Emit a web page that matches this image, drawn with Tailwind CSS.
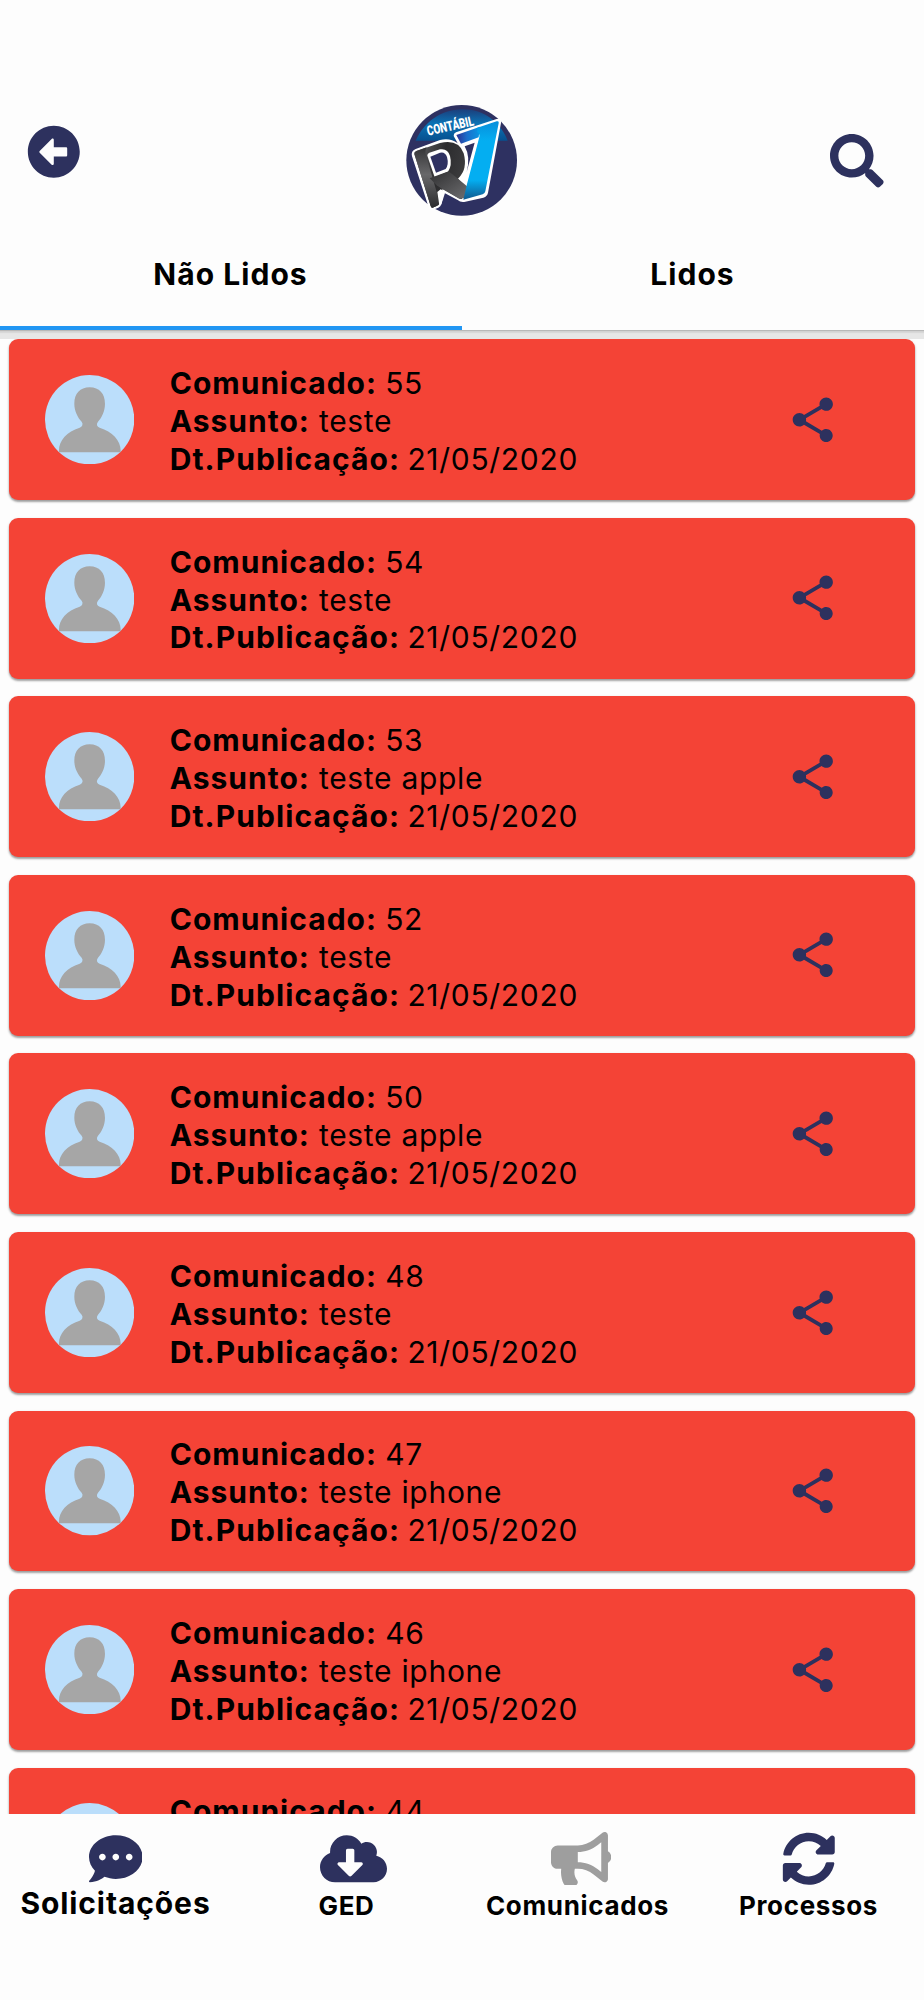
<!DOCTYPE html>
<html lang="pt-BR">
<head>
<meta charset="utf-8">
<title>Comunicados</title>
<script src="https://cdn.jsdelivr.net/npm/@tailwindcss/browser@4"></script>
</head>
<body class="bg-[#fdfdfd]">
<div class="flex h-[2000px] w-[924px] flex-col overflow-hidden bg-[#fdfdfd] font-['Inter',sans-serif] text-[30px] text-black">

  <header class="relative z-10 flex h-[330px] shrink-0 flex-col bg-[#fdfdfd] shadow-[0_1px_1px_#b8b8b8,0_3px_1px_#d8d8d8,0_9px_0_#e6e6e6]">
    <div class="flex h-[230px] items-start justify-between pr-[40px] pl-[27px]">
      <svg class="mt-[125px] size-[53.6px]" viewBox="0 0 512 512" fill="#2d315e"><path d="M256 504C119 504 8 393 8 256S119 8 256 8s248 111 248 248-111 248-248 248zm116-292H256v-70.9c0-10.7-13-16.1-20.5-8.5L121.2 247.5c-4.7 4.7-4.7 12.2 0 16.9l114.3 114.9c7.6 7.6 20.5 2.2 20.5-8.5V300h116c6.6 0 12-5.4 12-12v-64c0-6.6-5.4-12-12-12z"/></svg>
      <svg class="mt-[90px] mr-[-13px] h-[140px] w-[144px]" viewBox="0 0 432 420">
        <defs>
          <linearGradient id="sky" x1="0" y1="0" x2="0" y2="1"><stop offset="0" stop-color="#1b3f7c"/><stop offset=".45" stop-color="#0b72b4"/><stop offset="1" stop-color="#06508f"/></linearGradient>
          <linearGradient id="coal" x1="0" y1="0" x2="1" y2=".35"><stop offset="0" stop-color="#6a6a6c"/><stop offset=".3" stop-color="#464648"/><stop offset=".55" stop-color="#2c2c2e"/><stop offset="1" stop-color="#3c3c3e"/></linearGradient>
          <linearGradient id="coal2" x1="0" y1="0" x2="0" y2="1"><stop offset="0" stop-color="#343436"/><stop offset=".45" stop-color="#68686a"/><stop offset="1" stop-color="#2c2c2e"/></linearGradient>
          <linearGradient id="leg" x1="0" y1="0" x2="1" y2="1"><stop offset="0" stop-color="#2e2e30"/><stop offset="1" stop-color="#707072"/></linearGradient>
          <linearGradient id="seven" x1="0" y1="0" x2="0" y2="1"><stop offset="0" stop-color="#078fdb"/><stop offset=".25" stop-color="#04aef1"/><stop offset=".75" stop-color="#04aef1"/><stop offset="1" stop-color="#10598f"/></linearGradient>
          <linearGradient id="bar" x1="0" y1="0" x2="1" y2="0"><stop offset="0" stop-color="#2c2f92"/><stop offset=".45" stop-color="#1c6fcb"/><stop offset="1" stop-color="#0797e3"/></linearGradient>
        </defs>
        <circle cx="215" cy="211" r="166" fill="#2e3161"/>
        <path d="M77 152C102 96 151 60 215 58s116 38 138 94z" fill="url(#sky)"/>
        <path d="M66 199Q62 183 77 177L150 150Q180 142 203 160L191 138Q190 131 198 127L320 87Q336 83 333 99L294 308Q292 319 280 323L226 335Q212 338 203 330L162 308L154 343Q152 350 145 353L128 360Q119 362 116 352Z" fill="#fff"/>
        <path d="M73 192Q72 186 79 183L150 159Q206 146 221 190Q234 238 204 266L232 298L216 326Q212 328 205 324L158 296L148 341Q146 346 140 348L128 353Q123 354 122 348Z" fill="url(#coal)"/>
        <path d="M73 192Q72 186 79 183L110 172Q104 182 108 196L140 306L148 341L140 348L128 353Q123 354 122 348Z" fill="url(#coal2)"/>
        <path d="M112 197Q111 191 118 188L150 178Q173 174 180 198Q187 226 174 245L134 262Z" fill="#fff"/>
        <path d="M121 200L150 188Q165 184 171 201Q177 224 167 237L138 248Z" fill="#2e3161"/>
        <path d="M119 265L176 244L204 266L240 296L224 324L208 326L158 298L140 286Z" fill="url(#leg)"/>
        <path d="M152 298L166 306L154 343L148 346L142 306Z" fill="#fff"/>
        <path d="M199 135L270 110L266 142L213 161Z" fill="url(#bar)"/>
        <path d="M262 113L320 94Q328 92 326 100L286 304Q285 310 278 313L220 329L231 282L268 141Q270 132 262 126Z" fill="url(#seven)"/>
        <path d="M212 164L260 147L264 150L230 278L210 264Q238 226 226 184Q222 172 212 164Z" fill="#fff"/>
        <path d="M224 169L254 158L230 246Q242 200 224 169Z" fill="#2e3161"/>
        <text transform="translate(114 137) rotate(-12.500)" textLength="143" lengthAdjust="spacingAndGlyphs" font-family="Roboto, sans-serif" font-weight="900" font-size="41" fill="#fff">CONTÁBIL</text>
      </svg>
      <svg class="mt-[134px] size-[53.6px]" viewBox="0 0 512 512" fill="#2d315e"><path d="M505 442.7L405.3 343c-4.500-4.500-10.600-7-17-7H372c27.600-35.300 44-79.700 44-128C416 93.100 322.900 0 208 0S0 93.100 0 208s93.100 208 208 208c48.300 0 92.700-16.400 128-44v16.300c0 6.400 2.500 12.500 7 17l99.700 99.700c9.400 9.400 24.600 9.400 33.900 0l28.300-28.300c9.400-9.400 9.400-24.600.1-34zM208 336c-70.700 0-128-57.200-128-128 0-70.700 57.200-128 128-128 70.700 0 128 57.200 128 128 0 70.700-57.200 128-128 128z"/></svg>
    </div>
    <div class="grid grow grid-cols-2 text-center font-bold tracking-[1.050px]">
      <div class="border-b-[4px] border-[#2196f3] pt-[25px] pr-px leading-[38px]">Não Lidos</div>
      <div class="pt-[25px] pr-px leading-[38px]">Lidos</div>
    </div>
  </header>

  <main id="list" class="flex h-[1484.300px] shrink-0 flex-col gap-[17.86px] overflow-hidden px-[9px] pt-[9.300px]"></main>

  <nav class="grid h-[185.700px] shrink-0 grid-cols-4 bg-[#fdfdfd] text-[26px] font-bold tracking-[0.650px]">
    <div class="flex flex-col items-center pt-[17.300px]">
      <svg class="size-[53.6px] shrink-0" viewBox="0 0 512 512" fill="#2d315e"><path d="M256 32C114.600 32 0 125.100 0 240c0 49.600 21.400 95 57 130.700C44.500 421.100 2.700 466 2.200 466.500c-2.200 2.300-2.800 5.700-1.500 8.700S4.800 480 8 480c66.300 0 116-31.800 140.600-51.400 32.700 12.300 69 19.400 107.400 19.400 141.400 0 256-93.100 256-208S397.400 32 256 32zM128 272c-17.700 0-32-14.300-32-32s14.300-32 32-32 32 14.300 32 32-14.300 32-32 32zm128 0c-17.700 0-32-14.300-32-32s14.300-32 32-32 32 14.300 32 32-14.300 32-32 32zm128 0c-17.700 0-32-14.300-32-32s14.300-32 32-32 32 14.300 32 32-14.300 32-32 32z"/></svg>
      <span class="-mt-px text-[30px] leading-[38px] tracking-[0.900px]">Solicitações</span>
    </div>
    <div class="flex flex-col items-center pt-[17.300px]">
      <svg class="mr-[-13.400px] h-[53.6px] w-[67px] shrink-0" viewBox="0 0 640 512" fill="#2d315e"><path d="M537.600 226.600c4.100-10.700 6.400-22.400 6.400-34.600 0-53-43-96-96-96-19.700 0-38.100 6-53.300 16.200C367 64.200 315.300 32 256 32c-88.400 0-160 71.600-160 160 0 2.700.1 5.400.2 8.100C40.200 219.800 0 273.200 0 336c0 79.500 64.500 144 144 144h368c70.700 0 128-57.300 128-128 0-61.900-44-113.600-102.400-125.400zm-132.900 88.700L299.300 420.700c-6.200 6.200-16.400 6.200-22.600 0L171.300 315.300c-10.100-10.100-2.900-27.300 11.300-27.300H248V176c0-8.800 7.200-16 16-16h48c8.800 0 16 7.200 16 16v112h65.400c14.200 0 21.400 17.200 11.300 27.300z"/></svg>
      <span class="mt-[5px] leading-[32px]">GED</span>
    </div>
    <div class="flex flex-col items-center pt-[17.300px]">
      <svg class="mr-[-6.700px] h-[53.6px] w-[60.300px] shrink-0" viewBox="0 0 576 512" fill="#9e9e9e"><path d="M576 240c0-23.630-12.950-44.040-32-55.120V32.010C544 23.260 537.020 0 512 0c-7.120 0-14.190 2.380-19.980 7.020l-85.030 68.030C364.280 109.190 310.660 128 256 128H64c-35.350 0-64 28.650-64 64v96c0 35.350 28.650 64 64 64h33.700c-1.390 10.480-2.180 21.140-2.180 32 0 39.770 9.260 77.350 25.560 110.940 5.190 10.690 16.520 17.060 28.400 17.060h74.280c26.050 0 41.690-29.840 25.900-50.560-16.400-21.520-26.150-48.360-26.150-77.440 0-11.110 1.620-21.790 4.410-32H256c54.660 0 108.280 18.810 150.980 52.950l85.030 68.030a32.023 32.023 0 0 0 19.980 7.020c24.920 0 32-22.780 32-32V295.130C563.050 284.040 576 263.630 576 240zm-96 141.420l-33.050-26.440C392.950 311.780 325.120 288 256 288v-96c69.120 0 136.950-23.780 190.950-66.980L480 98.580v282.840z"/></svg>
      <span class="mt-[5px] leading-[32px]">Comunicados</span>
    </div>
    <div class="flex flex-col items-center pt-[17.300px]">
      <svg class="size-[53.6px] shrink-0" viewBox="0 0 512 512" fill="#2d315e"><path d="M370.720 133.280C339.458 104.008 298.888 87.962 255.848 88c-77.458.068-144.328 53.178-162.791 126.850-1.344 5.363-6.122 9.150-11.651 9.150H24.103c-7.498 0-13.194-6.807-11.807-14.176C33.933 94.924 134.813 8 256 8c66.448 0 126.791 26.136 171.315 68.685L463.030 40.970C478.149 25.851 504 36.559 504 57.941V192c0 13.255-10.745 24-24 24H345.941c-21.382 0-32.090-25.851-16.971-40.971l41.750-41.749zM32 296h134.059c21.382 0 32.090 25.851 16.971 40.971l-41.750 41.750c31.262 29.273 71.835 45.319 114.876 45.280 77.418-.070 144.315-53.144 162.787-126.849 1.344-5.363 6.122-9.150 11.651-9.150h57.304c7.498 0 13.194 6.807 11.807 14.176C478.067 417.076 377.187 504 256 504c-66.448 0-126.791-26.136-171.315-68.685L48.970 471.030C33.851 486.149 8 475.441 8 454.059V320c0-13.255 10.745-24 24-24z"/></svg>
      <span class="mt-[5px] leading-[32px]">Processos</span>
    </div>
  </nav>
</div>

<template id="card">
  <article class="flex h-[160.700px] shrink-0 items-center rounded-[9px] bg-[#f44336] pr-[75.500px] pl-[35.700px] shadow-[0_2px_2px_rgba(0,0,0,0.3),0_1px_3px_rgba(0,0,0,0.15)]">
    <svg class="size-[89.300px] shrink-0" viewBox="0 0 268 268"><circle cx="134" cy="134" r="134" fill="#bbdefb"/><path d="M134 37C105 37 88 56 88 86C88 108 98 127 110 140Q114 145 112 151Q110 156 104 158C66 170 42 196 42 226V232H227V226C227 196 202 170 164 158Q158 156 156 151Q155 145 159 140C171 127 180 108 180 86C180 56 163 37 134 37Z" fill="#a6a6a6"/></svg>
    <div class="ml-[35.700px] grow pt-[4.600px] leading-[37.900px] tracking-[0.700px]">
      <p><b class="font-bold tracking-[1.020px]">Comunicado: </b><span></span></p>
      <p><b class="mr-px font-bold tracking-[1px]">Assunto: </b><span></span></p>
      <p><b class="mr-[-1px] font-bold tracking-[1.100px]">Dt.Publicação: </b><span>21/05/2020</span></p>
    </div>
    <svg class="size-[53.6px] shrink-0" viewBox="0 0 24 24" fill="#2d315e"><path d="M18 16.080c-.76 0-1.440.3-1.960.77L8.910 12.700c.05-.23.09-.46.09-.7s-.04-.47-.09-.7l7.050-4.110c.54.5 1.250.81 2.040.81 1.660 0 3-1.340 3-3s-1.340-3-3-3-3 1.340-3 3c0 .24.04.47.09.7L8.040 9.810C7.500 9.310 6.790 9 6 9c-1.660 0-3 1.340-3 3s1.340 3 3 3c.79 0 1.500-.31 2.040-.81l7.120 4.160c-.05.21-.08.43-.08.65 0 1.610 1.310 2.920 2.920 2.920 1.610 0 2.920-1.310 2.920-2.920s-1.310-2.920-2.920-2.920z"/></svg>
  </article>
</template>
<script>
  const notices = [[55,'teste'],[54,'teste'],[53,'teste apple'],[52,'teste'],[50,'teste apple'],[48,'teste'],[47,'teste iphone'],[46,'teste iphone'],[44,'teste']];
  const list = document.getElementById('list');
  for (const [number, subject] of notices) {
    const card = document.getElementById('card').content.cloneNode(true);
    const spans = card.querySelectorAll('span');
    spans[0].textContent = number;
    spans[1].textContent = subject;
    list.append(card);
  }
</script>
</body>
</html>
